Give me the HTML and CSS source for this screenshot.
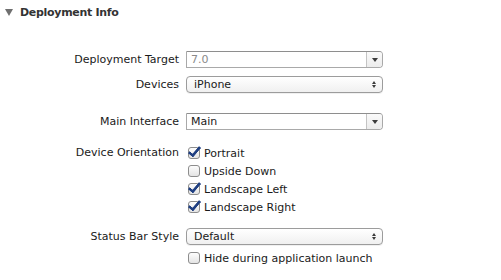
FILE: index.html
```html
<!DOCTYPE html>
<html>
<head>
  <title>Deployment Info</title>
  <link rel="stylesheet" href="styles.css">
</head>
<body>

  <div class="section-head">
    <span class="disclosure"></span>
    <h2>Deployment Info</h2>
  </div>

  <div class="form">
    <div class="group">
      <label class="lbl">Deployment Target</label>
      <div class="combo">
        <span class="combo-text dim">7.0</span>
        <span class="combo-btn"><span class="down"></span></span>
      </div>

      <label class="lbl">Devices</label>
      <div class="popup">
        <span>iPhone</span>
        <span class="updown"><span class="up"></span><span class="down"></span></span>
      </div>
    </div>

    <div class="group interface">
      <label class="lbl">Main Interface</label>
      <div class="combo">
        <span class="combo-text">Main</span>
        <span class="combo-btn"><span class="down"></span></span>
      </div>
    </div>

    <div class="group orientation">
      <label class="lbl">Device Orientation</label>
      <div class="checks">
        <label class="check"><span class="box on"></span>Portrait</label>
        <label class="check"><span class="box"></span>Upside Down</label>
        <label class="check"><span class="box on"></span>Landscape Left</label>
        <label class="check"><span class="box on"></span>Landscape Right</label>
      </div>
    </div>

    <div class="group status">
      <label class="lbl">Status Bar Style</label>
      <div class="popup">
        <span>Default</span>
        <span class="updown"><span class="up"></span><span class="down"></span></span>
      </div>

      <span></span>
      <div class="checks">
        <label class="check"><span class="box"></span>Hide during application launch</label>
      </div>
    </div>
  </div>

</body>
</html>
```

FILE: styles.css
```css
body {
  margin: 0;
  background: #fff;
  font-family: "Lucida Grande", "DejaVu Sans", sans-serif;
  font-size: 11px;
  color: #1a1a1a;
}

.section-head {
  display: flex;
  align-items: center;
  height: 24px;
  padding-left: 5px;
}
.disclosure {
  width: 0;
  height: 0;
  border-left: 4px solid transparent;
  border-right: 4px solid transparent;
  border-top: 7px solid #6f6f6f;
  margin-right: 7px;
}
.section-head h2 {
  margin: 0;
  font-size: 11px;
  letter-spacing: -0.3px;
  font-weight: bold;
  color: #333;
}

.form {
  padding-top: 27px;
}
.group {
  display: grid;
  grid-template-columns: 179px 197px;
  column-gap: 7px;
  row-gap: 8px;
  align-items: center;
  margin-bottom: 20px;
}
.group.interface {
  margin-bottom: 15px;
}
.group.orientation {
  margin-bottom: 13px;
}
.group.status {
  row-gap: 5px;
}
.lbl {
  text-align: right;
  align-self: start;
  line-height: 17px;
}
.orientation .lbl {
  line-height: 16px;
}

.combo {
  display: flex;
  height: 17px;
  box-sizing: border-box;
  border: 1px solid #a9a9a9;
  border-top-color: #8e8e8e;
  border-radius: 0 4px 4px 0;
  background: #fff;
}
.combo-text {
  flex: 1;
  padding-left: 4px;
  line-height: 15px;
}
.combo-text.dim {
  color: #8a8a8a;
}
.combo-btn {
  width: 15px;
  border-left: 1px solid #c4c4c4;
  background: linear-gradient(#fafafa, #ececec);
  border-radius: 0 3px 3px 0;
  display: flex;
  align-items: center;
  justify-content: center;
}

.popup {
  display: flex;
  align-items: center;
  justify-content: space-between;
  height: 17px;
  box-sizing: border-box;
  border: 1px solid #9c9c9c;
  border-radius: 4px;
  background: linear-gradient(#ffffff, #f0f0f0);
  box-shadow: 0 1px 0 rgba(0, 0, 0, 0.06);
  padding: 0 6px 0 7px;
}
.updown {
  display: flex;
  flex-direction: column;
  gap: 1px;
}

.down, .up {
  width: 0;
  height: 0;
  border-left: 3px solid transparent;
  border-right: 3px solid transparent;
}
.down {
  border-top: 4px solid #3c3c3c;
}
.up {
  border-bottom: 4px solid #3c3c3c;
}
.updown .up, .updown .down {
  border-left-width: 2px;
  border-right-width: 2px;
  border-top-width: 3px;
  border-bottom-width: 3px;
}
.updown .up { border-top-width: 0; }
.updown .down { border-bottom-width: 0; }

.checks {
  display: flex;
  flex-direction: column;
  gap: 2px;
}
.check {
  display: flex;
  align-items: center;
  height: 16px;
}
.box {
  position: relative;
  width: 10px;
  height: 10px;
  border: 1px solid #8d8d8d;
  border-radius: 3px;
  background: linear-gradient(#fdfdfd, #e4e4e4);
  margin: 0 4px 0 2px;
}
.box.on::after {
  content: "";
  position: absolute;
  left: 2px;
  top: -4px;
  width: 4px;
  height: 10px;
  border-right: 3px solid #1f3f82;
  border-bottom: 3px solid #1f3f82;
  transform: rotate(40deg);
  border-radius: 1px;
}
```
